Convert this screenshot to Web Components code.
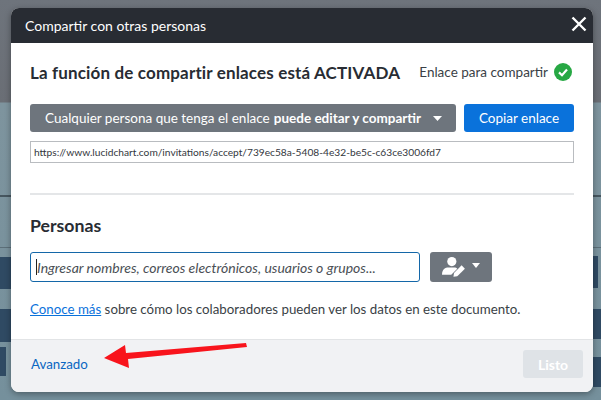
<!DOCTYPE html>
<html lang="es"><head><meta charset="utf-8"><style>
html,body{margin:0;height:400px;overflow:hidden}
body{font-family:"Lato","Noto Sans",sans-serif}
</style></head><body>
<share-backdrop>
<share-dialog>
<div slot="title">Compartir con otras personas</div>
</share-dialog>
</share-backdrop>
<script>
function def(name,html){customElements.define(name,class extends HTMLElement{constructor(){super();this.attachShadow({mode:'open'}).innerHTML=html}})}
def('share-backdrop',`<style>
:host{display:block;position:relative;width:601px;height:400px;overflow:hidden;background:linear-gradient(#6e747c 0,#6a6e75 102px,#7e949e 103px,#75909c 100%)}
.deco{position:absolute;background:#2f4a63}
.line{position:absolute;left:0;width:601px;background:#46565f}
</style>
<div class="line" style="top:195px;height:2px"></div>
<div class="line" style="top:247px;height:1px;background:#5c6f79"></div>
<div class="deco" style="left:0;top:257px;width:11px;height:32px"></div>
<div class="deco" style="left:0;top:309px;width:11px;height:33px"></div>
<div class="deco" style="left:0;top:347px;width:6px;height:29px"></div>
<div class="deco" style="left:593px;top:256px;width:5px;height:32px"></div>
<div class="deco" style="left:593px;top:309px;width:8px;height:30px"></div>
<div class="deco" style="left:593px;top:357px;width:8px;height:30px"></div>
<slot></slot>`);
def('share-dialog',`<style>
:host{display:flex;flex-direction:column;position:absolute;left:11px;top:8px;width:582px;height:384px;box-sizing:border-box;border-radius:8px;overflow:hidden;background:#fff;box-shadow:0 2px 6px rgba(0,0,0,.35);color:#282c33;font-family:"Lato","Noto Sans",sans-serif}
header{height:35px;flex:none;background:#282c33;color:#fff;font-size:14px;display:flex;align-items:center;justify-content:space-between;padding:0 5px 0 14px}
header svg{margin-top:-3px}
.body{flex:1;padding:0 19px}
.row1{display:flex;justify-content:space-between;align-items:center;margin-top:16px;height:26px}
h2{margin:0;font-size:17px;font-weight:700;letter-spacing:.15px;white-space:nowrap}
.status{display:flex;align-items:center;gap:6px;font-size:13.5px;color:#3a3f46;margin-right:2px}
.row2{display:flex;justify-content:space-between;margin-top:19px}
.btn{height:28px;border-radius:3px;display:flex;align-items:center;box-sizing:border-box;font-size:13.5px;color:#fff;white-space:nowrap}
.perm{width:426px;background:#6e757d;padding-left:15px;gap:0}
.perm b{margin-left:4px}
.perm svg{margin-left:auto;margin-right:14px}
.copy{width:110px;background:#0a72db;justify-content:center}
.url{margin-top:9px;height:22px;border:1px solid #b9bcc0;box-sizing:border-box;font-size:10.2px;line-height:20px;padding-left:3px;color:#33373d}
hr{border:0;height:2px;background:#e4e6e8;margin:30px 0 0}
h3{margin:19px 0 0;font-size:17.7px;font-weight:700;line-height:24px}
.row3{display:flex;gap:10px;margin-top:14px}
.input{width:390px;height:30px;box-sizing:border-box;border:1px solid #1467a8;border-radius:3px;font-style:italic;font-size:14px;display:flex;align-items:center;padding-left:5px;color:#4a4f55}
.cursor{width:1px;height:16px;background:#222}
.role{width:62px;height:30px;background:#6e757d;border-radius:3px;display:flex;align-items:center;padding-left:12px;box-sizing:border-box;gap:6px}
.role svg+svg{margin-top:-4px}
.note{margin-top:17px;font-size:13.3px;line-height:20px;color:#3a3f46}
.note a{color:#0a72db;text-decoration:underline}
footer{height:53px;flex:none;box-sizing:border-box;border-top:1px solid #e2e4e6;background:#f1f2f4;display:flex;align-items:center;justify-content:space-between;padding:0 10px 4px 20px}
footer a{color:#0a66c2;font-size:13.3px}
.done{width:60px;height:28px;border-radius:3px;background:#dfe3e7;color:#fff;font-weight:700;font-size:14px;display:flex;align-items:center;justify-content:center}
.arrow{position:absolute;left:89px;top:332px;pointer-events:none}
</style>
<header><slot name="title"></slot>
<svg width="18" height="18" viewBox="0 0 18 18"><path d="M2.5 2.5L15.5 15.5M15.5 2.5L2.5 15.5" stroke="#fff" stroke-width="2.4"/></svg></header>
<div class="body">
<div class="row1"><h2>La función de compartir enlaces está ACTIVADA</h2>
<div class="status">Enlace para compartir <svg width="18" height="18" viewBox="0 0 18 18"><circle cx="9" cy="9" r="9" fill="#27a844"/><path d="M5 9.4L8 12.2L13 6.5" fill="none" stroke="#fff" stroke-width="2.2"/></svg></div></div>
<div class="row2"><div class="btn perm"><span>Cualquier persona que tenga el enlace</span><b>puede editar y compartir</b><svg width="9" height="5" viewBox="0 0 10 6" preserveAspectRatio="none"><path d="M0 0H10L5 6Z" fill="#fff"/></svg></div><div class="btn copy">Copiar enlace</div></div>
<div class="url">https://www.lucidchart.com/invitations/accept/739ec58a-5408-4e32-be5c-c63ce3006fd7</div>
<hr>
<h3>Personas</h3>
<div class="row3"><div class="input"><span class="cursor"></span>Ingresar nombres, correos electrónicos, usuarios o grupos...</div>
<div class="role"><svg width="24" height="22" viewBox="0 0 22 20"><circle cx="9" cy="5" r="4.2" fill="#fff"/><path d="M0 17C0 12 3 10.5 6 10.5H11C12.5 10.5 13.5 11 14 11.5L8.5 17Z" fill="#fff"/><path d="M10.5 19L11 15.5L18 8.5L21 11.5L14 18.5Z" fill="#fff"/></svg><svg width="8" height="5" viewBox="0 0 10 6" preserveAspectRatio="none"><path d="M0 0H10L5 6Z" fill="#fff"/></svg></div></div>
<div class="note"><a>Conoce más</a> sobre cómo los colaboradores pueden ver los datos en este documento.</div>
</div>
<footer><a>Avanzado</a><div class="done">Listo</div></footer>
<svg class="arrow" width="150" height="32" viewBox="100 340 150 32"><path d="M104 358L125 345L126 353L246 343L247 347L128 359L129 368Z" fill="#f8141c"/></svg>`);
</script></body></html>
